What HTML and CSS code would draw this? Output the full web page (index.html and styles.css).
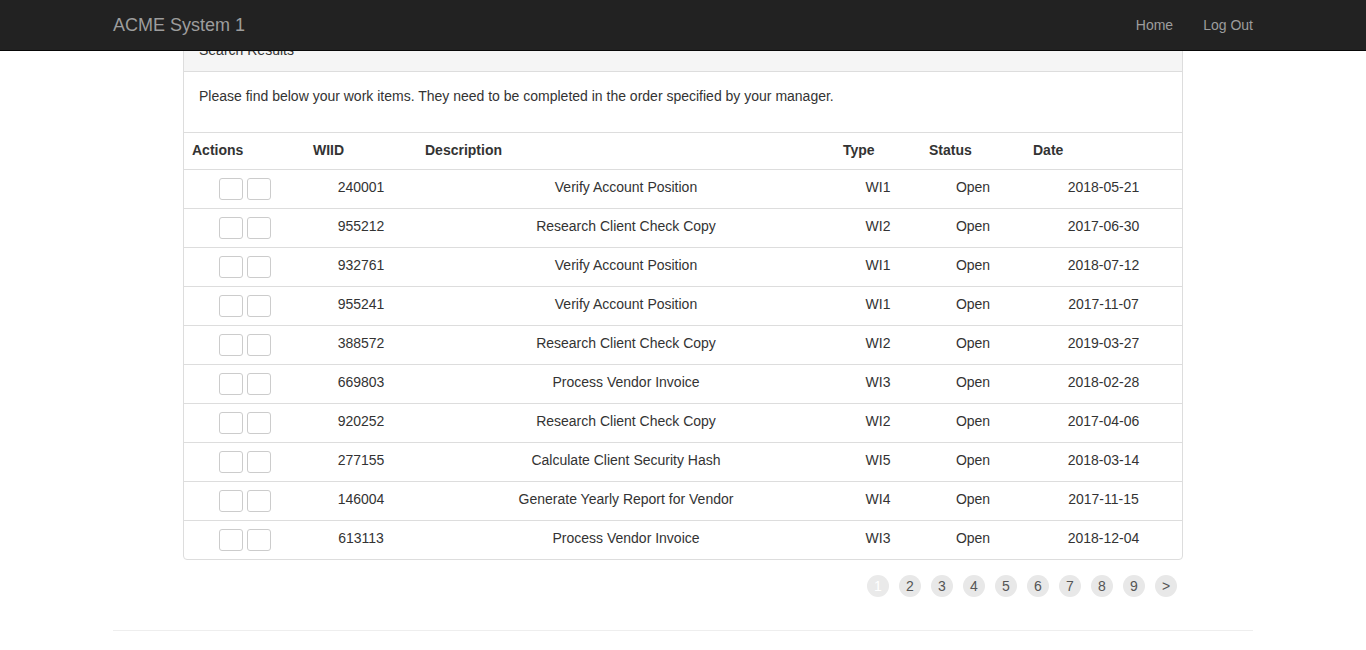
FILE: index.html
```html
<!DOCTYPE html>
<html>
<head>
<meta charset="utf-8">
<title>ACME System 1</title>
<link rel="stylesheet" href="styles.css">
</head>
<body>
<nav class="navbar">
  <div class="navbar-inner">
    <a class="brand" href="#">ACME System 1</a>
    <ul class="nav-links">
      <li><a href="#">Home</a></li>
      <li><a href="#">Log Out</a></li>
    </ul>
  </div>
</nav>
<main class="page">
  <section class="panel">
    <div class="panel-heading">Search Results</div>
    <div class="panel-body">
      <p>Please find below your work items. They need to be completed in the order specified by your manager.</p>
    </div>
    <table class="results">
      <colgroup>
        <col class="c-actions"><col class="c-wiid"><col class="c-desc"><col class="c-type"><col class="c-status"><col class="c-date">
      </colgroup>
      <thead>
        <tr><th>Actions</th><th>WIID</th><th>Description</th><th>Type</th><th>Status</th><th>Date</th></tr>
      </thead>
      <tbody>
        <tr><td><div class="acts"><button class="btn"></button><button class="btn"></button></div></td><td>240001</td><td>Verify Account Position</td><td>WI1</td><td>Open</td><td>2018-05-21</td></tr>
        <tr><td><div class="acts"><button class="btn"></button><button class="btn"></button></div></td><td>955212</td><td>Research Client Check Copy</td><td>WI2</td><td>Open</td><td>2017-06-30</td></tr>
        <tr><td><div class="acts"><button class="btn"></button><button class="btn"></button></div></td><td>932761</td><td>Verify Account Position</td><td>WI1</td><td>Open</td><td>2018-07-12</td></tr>
        <tr><td><div class="acts"><button class="btn"></button><button class="btn"></button></div></td><td>955241</td><td>Verify Account Position</td><td>WI1</td><td>Open</td><td>2017-11-07</td></tr>
        <tr><td><div class="acts"><button class="btn"></button><button class="btn"></button></div></td><td>388572</td><td>Research Client Check Copy</td><td>WI2</td><td>Open</td><td>2019-03-27</td></tr>
        <tr><td><div class="acts"><button class="btn"></button><button class="btn"></button></div></td><td>669803</td><td>Process Vendor Invoice</td><td>WI3</td><td>Open</td><td>2018-02-28</td></tr>
        <tr><td><div class="acts"><button class="btn"></button><button class="btn"></button></div></td><td>920252</td><td>Research Client Check Copy</td><td>WI2</td><td>Open</td><td>2017-04-06</td></tr>
        <tr><td><div class="acts"><button class="btn"></button><button class="btn"></button></div></td><td>277155</td><td>Calculate Client Security Hash</td><td>WI5</td><td>Open</td><td>2018-03-14</td></tr>
        <tr><td><div class="acts"><button class="btn"></button><button class="btn"></button></div></td><td>146004</td><td>Generate Yearly Report for Vendor</td><td>WI4</td><td>Open</td><td>2017-11-15</td></tr>
        <tr><td><div class="acts"><button class="btn"></button><button class="btn"></button></div></td><td>613113</td><td>Process Vendor Invoice</td><td>WI3</td><td>Open</td><td>2018-12-04</td></tr>
      </tbody>
    </table>
  </section>
  <ul class="pager">
    <li class="active">1</li><li>2</li><li>3</li><li>4</li><li>5</li><li>6</li><li>7</li><li>8</li><li>9</li><li>&gt;</li>
  </ul>
  <hr class="footer-rule">
</main>
</body>
</html>
```
FILE: styles.css
```css
* { box-sizing: border-box; }
html, body { margin: 0; padding: 0; }
body {
  font-family: "Liberation Sans", Arial, Helvetica, sans-serif;
  font-size: 14px;
  line-height: 20px;
  color: #333;
  background: #fff;
}
a { text-decoration: none; }

.navbar {
  position: fixed;
  top: 0; left: 0; right: 0;
  height: 51px;
  background: #222;
  border-bottom: 1px solid #080808;
  z-index: 10;
}
.navbar-inner {
  width: 1140px;
  margin: 0 auto;
  height: 50px;
  display: flex;
  justify-content: space-between;
  align-items: center;
}
.brand {
  color: #9d9d9d;
  font-size: 18px;
  line-height: 20px;
}
.nav-links {
  list-style: none;
  margin: 0;
  padding: 0;
  display: flex;
  gap: 30px;
}
.nav-links a { color: #9d9d9d; font-size: 14px; }

.page {
  width: 1140px;
  margin: 0 auto;
  padding-top: 30px;
}
.panel {
  width: 1000px;
  margin: 0 auto;
  border: 1px solid #ddd;
  border-radius: 4px;
  overflow: hidden;
}
.panel-heading {
  background: #f5f5f5;
  padding: 9px 15px 11px;
  border-bottom: 1px solid #ddd;
}
.panel-body { padding: 14px 15px 16px; }
.panel-body p { margin: 0 0 10px; }

.results {
  width: 100%;
  border-collapse: collapse;
  border-top: 1px solid #ddd;
  table-layout: fixed;
}
.c-actions { width: 121px; }
.c-wiid { width: 112px; }
.c-desc { width: 418px; }
.c-type { width: 86px; }
.c-status { width: 104px; }
.c-date { width: auto; }
.results th {
  text-align: left;
  font-weight: bold;
  padding: 7px 8px 9px;
  border-bottom: 1px solid #ddd;
}
.results td {
  text-align: center;
  vertical-align: top;
  padding: 7px 8px 9px;
  border-top: 1px solid #ddd;
}
.results td:first-child { padding: 8px; }
.acts {
  display: flex;
  justify-content: center;
  gap: 4px;
  height: 22px;
}
.btn {
  width: 24px;
  height: 22px;
  padding: 0;
  margin: 0;
  background: #fff;
  border: 1px solid #ccc;
  border-radius: 3px;
}

.pager {
  list-style: none;
  display: flex;
  justify-content: flex-end;
  gap: 10px;
  width: 1000px;
  margin: 15px auto 0;
  padding: 0 6px 0 0;
}
.pager li {
  width: 22px;
  height: 22px;
  border-radius: 50%;
  background: #e8e8e8;
  color: #555;
  font-size: 14px;
  line-height: 22px;
  text-align: center;
}
.pager li.active { color: #fff; background: #eaeaea; }

.footer-rule {
  margin: 33px 0 0;
  border: 0;
  border-top: 1px solid #eee;
}
```
